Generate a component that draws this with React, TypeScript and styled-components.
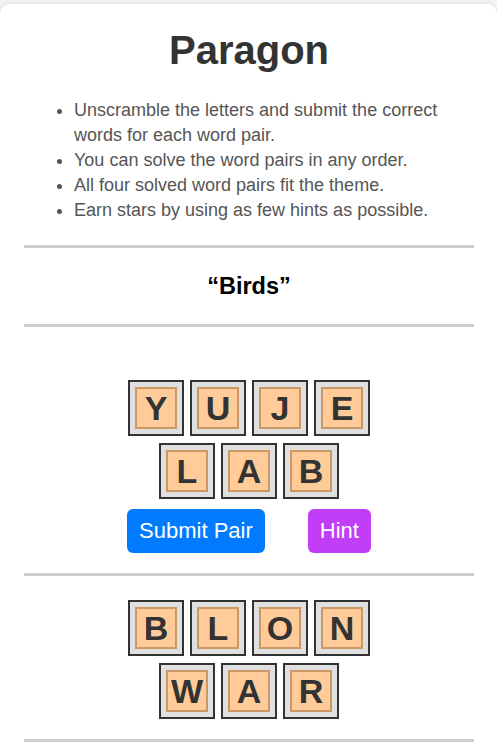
import React from "react";
import styled, { createGlobalStyle } from "styled-components";

const GlobalStyle = createGlobalStyle`
  html, body {
    margin: 0;
    padding: 0;
    background: #f4f4f4;
    font-family: "Liberation Sans", Arial, Helvetica, sans-serif;
  }
  body {
    padding-top: 4px;
  }
`;

const Card = styled.div`
  background: #ffffff;
  border-radius: 10px;
  box-shadow: 0 0 6px rgba(0, 0, 0, 0.1);
  padding: 23px 23px 0 24px;
  min-height: 760px;
`;

const Title = styled.h1`
  margin: 0;
  text-align: center;
  font-size: 40px;
  line-height: 46px;
  font-weight: 700;
  color: #333333;
`;

const Rules = styled.ul`
  margin: 25px 0 22px 0;
  padding-left: 50px;
  font-size: 18px;
  line-height: 25px;
  color: #555555;
`;

const Divider = styled.div`
  height: 3px;
  background: #cccccc;
`;

const Theme = styled.h2`
  margin: 0;
  padding: 26px 0 25px;
  text-align: center;
  font-size: 23.5px;
  line-height: 25px;
  font-weight: 700;
  color: #000000;
`;

const Pair = styled.section<{ $lead?: boolean }>`
  display: flex;
  flex-direction: column;
  align-items: center;
  gap: 7px;
  padding: ${(p) => (p.$lead ? "53px" : "24px")} 0 20px;
`;

const TileRow = styled.div`
  display: flex;
  justify-content: center;
  gap: 6px;
`;

const Tile = styled.div`
  width: 52px;
  height: 52px;
  box-sizing: content-box;
  border: 2px solid #333333;
  background: #e0e0e0;
  display: flex;
  align-items: center;
  justify-content: center;
`;

const Letter = styled.span`
  width: 38px;
  height: 38px;
  border: 2px solid #cc9966;
  background: #ffcc99;
  display: flex;
  align-items: center;
  justify-content: center;
  font-size: 34px;
  font-weight: 700;
  color: #333333;
`;

const Actions = styled.div`
  display: flex;
  justify-content: center;
  gap: 43px;
  margin-top: 3px;
`;

const Button = styled.button<{ $tone: string }>`
  border: none;
  border-radius: 6px;
  background: ${(p) => p.$tone};
  color: #ffffff;
  font-family: "Liberation Sans", Arial, Helvetica, sans-serif;
  font-size: 22px;
  line-height: 24px;
  padding: 10px 12px;
  cursor: pointer;
`;

const rules = [
  "Unscramble the letters and submit the correct words for each word pair.",
  "You can solve the word pairs in any order.",
  "All four solved word pairs fit the theme.",
  "Earn stars by using as few hints as possible.",
];

type PairData = { rows: string[]; actions?: boolean };

const pairs: PairData[] = [
  { rows: ["YUJE", "LAB"], actions: true },
  { rows: ["BLON", "WAR"] },
];

export default function App() {
  return (
    <>
      <GlobalStyle />
      <Card>
        <Title>Paragon</Title>
        <Rules>
          {rules.map((r) => (
            <li key={r}>{r}</li>
          ))}
        </Rules>
        <Divider />
        <Theme>“Birds”</Theme>
        <Divider />
        {pairs.map((pair, i) => (
          <React.Fragment key={i}>
            <Pair $lead={i === 0}>
              {pair.rows.map((row, j) => (
                <TileRow key={j}>
                  {row.split("").map((ch, k) => (
                    <Tile key={k}>
                      <Letter>{ch}</Letter>
                    </Tile>
                  ))}
                </TileRow>
              ))}
              {pair.actions && (
                <Actions>
                  <Button $tone="#007bff">Submit Pair</Button>
                  <Button $tone="#c23df7">Hint</Button>
                </Actions>
              )}
            </Pair>
            <Divider />
          </React.Fragment>
        ))}
      </Card>
    </>
  );
}
